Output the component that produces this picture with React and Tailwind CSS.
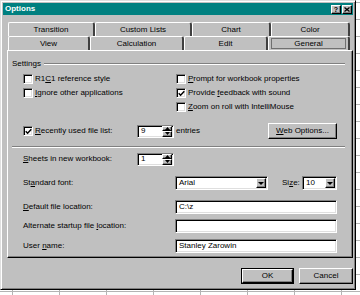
import React from "react";

const raised =
  "bg-[#c0c0c0] border border-t-white border-l-white border-b-black border-r-black shadow-[inset_-1px_-1px_0_#808080]";
const sunken =
  "bg-white border border-t-[#808080] border-l-[#808080] border-b-white border-r-white shadow-[inset_1px_1px_0_#000,inset_-1px_-1px_0_#dfdfdf]";

function Check({ checked }) {
  return (
    <div className={"w-[10px] h-[10px] shrink-0 flex items-center justify-center " + sunken}>
      {checked && (
        <svg width="7" height="7" viewBox="0 0 7 7">
          <path d="M0.7 3.2 L2.6 5.2 L6.3 1.2" stroke="#000" strokeWidth="1.5" fill="none" />
        </svg>
      )}
    </div>
  );
}

function U({ children }) {
  return <span className="underline underline-offset-[1px]">{children}</span>;
}

function CheckRow({ checked, children }) {
  return (
    <div className="flex items-center h-[14px] gap-[2px]">
      <Check checked={checked} />
      <span className="whitespace-nowrap">{children}</span>
    </div>
  );
}

function Spin({ value }) {
  return (
    <div className={"w-[37px] h-[13px] flex items-center justify-between pl-[3px] pr-[1px] " + sunken}>
      <span>{value}</span>
      <div className="flex flex-col h-[11px] w-[10px]">
        <div className={"flex-1 flex items-center justify-center " + raised}>
          <svg width="5" height="3" viewBox="0 0 5 3"><path d="M2.5 0 L5 3 L0 3 Z" fill="#000" /></svg>
        </div>
        <div className={"flex-1 flex items-center justify-center " + raised}>
          <svg width="5" height="3" viewBox="0 0 5 3"><path d="M0 0 L5 0 L2.5 3 Z" fill="#000" /></svg>
        </div>
      </div>
    </div>
  );
}

function Drop({ value, className }) {
  return (
    <div className={"h-[14px] flex items-center justify-between pl-[3px] pr-[1px] " + sunken + " " + className}>
      <span>{value}</span>
      <div className={"w-[10px] h-[10px] flex items-center justify-center " + raised}>
        <svg width="6" height="3" viewBox="0 0 6 3"><path d="M0 0 L6 0 L3 3 Z" fill="#000" /></svg>
      </div>
    </div>
  );
}

function Field({ value }) {
  return (
    <div className={"w-[162px] h-[14px] flex items-center pl-[3px] " + sunken}>
      <span>{value}</span>
    </div>
  );
}

function Tab({ className, children, selected }) {
  return (
    <div
      className={
        "h-full flex items-center justify-center border-l border-t border-white border-r-2 border-r-[#404040] rounded-tl-[2px] rounded-tr-[3px] " +
        className
      }
    >
      {selected ? (
        <div className="w-full h-[11px] mx-[2px] flex items-center justify-center border border-[#707070]">
          {children}
        </div>
      ) : (
        children
      )}
    </div>
  );
}

function FormRow({ label, children, labelW = "w-[152px]" }) {
  return (
    <div className="flex items-center h-[14px] ml-[11px]">
      <span className={"whitespace-nowrap " + labelW}>{label}</span>
      {children}
    </div>
  );
}

export default function App() {
  return (
    <div className="w-[360px] h-[295px] overflow-hidden bg-white bg-[linear-gradient(to_right,#b4b4b4_1px,transparent_1px),linear-gradient(to_bottom,#b4b4b4_1px,transparent_1px)] bg-[size:47px_17px] bg-[position:12px_2px] font-['Liberation_Sans',Arial,sans-serif] text-[8px] text-black leading-none">
      <div className="w-[356px] h-[290px] flex flex-col bg-[#c0c0c0] border border-t-[#dfdfdf] border-l-[#dfdfdf] border-r-black border-b-black shadow-[inset_1px_1px_0_#fff,inset_-1px_-1px_0_#808080]">
        {/* Title bar */}
        <div className="mt-[2px] ml-[2px] mr-[2px] h-[12px] bg-[#008080] flex items-center justify-between pl-[2px] pr-[1px]">
          <span className="text-white font-bold text-[8px]">Options</span>
          <div className="flex gap-[1px]">
            <div className={"w-[10px] h-[9px] flex items-center justify-center font-bold text-[7px] " + raised}>?</div>
            <div className={"w-[10px] h-[9px] flex items-center justify-center " + raised}>
              <svg width="6" height="5" viewBox="0 0 6 5">
                <path d="M0.5 0.5 L5.5 4.5 M5.5 0.5 L0.5 4.5" stroke="#000" strokeWidth="1.3" />
              </svg>
            </div>
          </div>
        </div>

        {/* Tabs */}
        <div className="mt-[7px] ml-[7px] h-[14px] flex">
          <Tab className="w-[87px]">Transition</Tab>
          <Tab className="w-[97px]">Custom Lists</Tab>
          <Tab className="w-[79px]">Chart</Tab>
          <Tab className="w-[79px]">Color</Tab>
        </div>
        <div className="ml-[7px] h-[14px] flex">
          <Tab className="w-[82px]">View</Tab>
          <Tab className="w-[94px]">Calculation</Tab>
          <Tab className="w-[84px]">Edit</Tab>
          <Tab className="w-[82px]" selected>General</Tab>
        </div>

        {/* Panel */}
        <div className="ml-[6px] w-[346px] h-[208px] flex flex-col border border-t-white border-l-white border-r-black border-b-black shadow-[inset_-1px_-1px_0_#808080] px-[4px]">
          <div className="mt-[8px] h-[10px] flex items-center gap-[3px] mr-[3px]">
            <span>Settings</span>
            <div className="flex-1 h-[2px] border-t border-t-[#808080] border-b border-b-white" />
          </div>

          <div className="mt-[3px] ml-[11px] grid grid-cols-[153px_1fr]">
            <CheckRow>R1<U>C</U>1 reference style</CheckRow>
            <CheckRow><U>P</U>rompt for workbook properties</CheckRow>
            <CheckRow><U>I</U>gnore other applications</CheckRow>
            <CheckRow checked>Provide <U>f</U>eedback with sound</CheckRow>
            <div />
            <CheckRow><U>Z</U>oom on roll with IntelliMouse</CheckRow>
          </div>

          <div className="mt-[9px] ml-[11px] h-[16px] flex items-center">
            <div className="w-[114px] flex items-center gap-[2px]">
              <Check checked />
              <span className="whitespace-nowrap"><U>R</U>ecently used file list:</span>
            </div>
            <Spin value="9" />
            <span className="ml-[2px] w-[92px]">entries</span>
            <div className={"w-[69px] h-[16px] flex items-center justify-center " + raised}>
              <span><U>W</U>eb Options...</span>
            </div>
          </div>

          <div className="mt-[7px] mr-[3px] h-[2px] border-t border-t-[#808080] border-b border-b-white" />

          <div className="mt-[4px]">
            <FormRow label={<><U>S</U>heets in new workbook:</>} labelW="w-[114px]">
              <Spin value="1" />
            </FormRow>
          </div>

          <div className="mt-[10px]">
            <FormRow label={<>St<U>a</U>ndard font:</>}>
              <Drop value="Arial" className="w-[93px]" />
              <span className="ml-[14px] w-[20px]">Si<U>z</U>e:</span>
              <Drop value="10" className="w-[35px]" />
            </FormRow>
          </div>

          <div className="mt-[10px]">
            <FormRow label={<><U>D</U>efault file location:</>}>
              <Field value="C:\z" />
            </FormRow>
          </div>

          <div className="mt-[5px]">
            <FormRow label={<>Alternate startup file <U>l</U>ocation:</>}>
              <Field value="" />
            </FormRow>
          </div>

          <div className="mt-[6px]">
            <FormRow label={<>User <U>n</U>ame:</>}>
              <Field value="Stanley Zarowin" />
            </FormRow>
          </div>
        </div>

        {/* Buttons */}
        <div className="mt-[10px] flex justify-end gap-[5px] pr-[2px]">
          <div className="w-[53px] h-[16px] border border-black">
            <div className={"w-full h-full flex items-center justify-center " + raised}>OK</div>
          </div>
          <div className={"w-[54px] h-[16px] flex items-center justify-center " + raised}>Cancel</div>
        </div>
      </div>
    </div>
  );
}
